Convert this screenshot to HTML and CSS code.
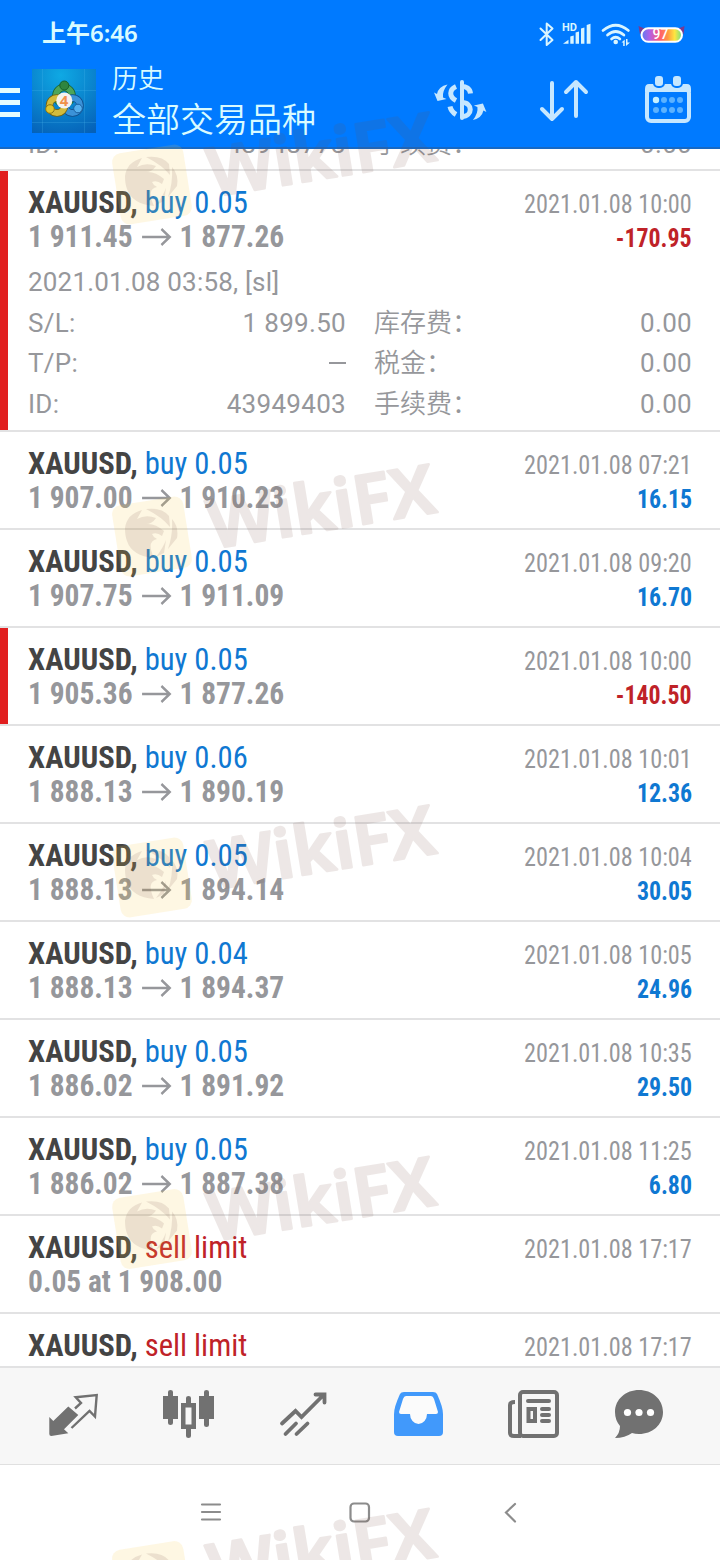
FILE: index.html
```html
<!DOCTYPE html>
<html lang="zh-CN">
<head>
<meta charset="utf-8">
<title>历史</title>
<link rel="stylesheet" href="styles.css">
</head>
<body>
<div class="screen">
  <header class="header">
    <div class="status">
      <div class="clock">上午6:46</div>
      <svg class="status-icons" width="150" height="32" viewBox="0 0 150 32">
        <defs><linearGradient id="batt"><stop offset="0" stop-color="#5a7df0"/><stop offset=".2" stop-color="#b060e8"/><stop offset=".45" stop-color="#ff5a70"/><stop offset=".65" stop-color="#ff9a40"/><stop offset=".82" stop-color="#ffe640"/><stop offset="1" stop-color="#6fe08a"/></linearGradient></defs>
        <g fill="none" stroke="#d9f5ff" stroke-width="2" stroke-linecap="round" stroke-linejoin="round">
          <path d="M10.500 11.500l12 11.500-5.800 5V6.500l5.800 5-12 11.500"/>
          <path d="M73 13.500q12.700-10.500 25.400 0M77.500 18q8.200-7 16.400 0M81.500 22q4.200-3.500 8.400 0" stroke-width="2.700"/>
        </g>
        <g fill="#d9f5ff">
          <path d="M33 26.700l5.500-4v4zM40.300 26.700V19.500l3.400-1v8.200zM45.600 26.700V15.500l3.400-1v12.200zM51 26.700V11.500l3.400-1v16.200zM56.700 26.700V8l3.800-1.200v19.900z"/>
          <circle cx="85.700" cy="25" r="2.300"/>
          <path d="M91.500 25.500l3.200-3v6.500h-1.500v-3.500zM96 22h1.500v3.500h2.500l-4 3.500z"/>
          <text x="32" y="14" class="hd">HD</text>
        </g>
        <path d="M108.500 9l6 2.500-4.500 6zM154.500 9l-6 2.500 5 6z" fill="#7a3a90"/>
        <rect x="111.500" y="11.300" width="40.500" height="13.500" rx="6.700" fill="url(#batt)" stroke="#fff" stroke-width="2"/>
        <text x="122.500" y="22" class="pct">97</text>
      </svg>
    </div>
    <div class="bar">
      <div class="menu"><i></i><i></i><i></i></div>
      <svg class="logo" width="64" height="64" viewBox="0 0 64 64">
        <defs>
          <radialGradient id="lb" cx=".45" cy=".1" r="1"><stop offset="0" stop-color="#0fa9e4"/><stop offset="1" stop-color="#0561b8"/></radialGradient>
        </defs>
        <rect width="64" height="64" fill="url(#lb)"/>
        <path d="M10.500 0v64M52.500 0v64M0 21.500h64M0 53.500h64" stroke="#58bdf0" stroke-opacity=".22"/>
        <g fill="none">
          <circle cx="32" cy="26.500" r="8" stroke="#17602a" stroke-width="7.500"/>
          <circle cx="32" cy="26.500" r="8" stroke="#4da55a" stroke-width="6"/>
          <circle cx="40.500" cy="36.500" r="7.500" stroke="#124f8c" stroke-width="7.500"/>
          <circle cx="40.500" cy="36.500" r="7.500" stroke="#3b92d8" stroke-width="6"/>
          <circle cx="25" cy="36.500" r="7.500" stroke="#746312" stroke-width="7.500"/>
          <circle cx="25" cy="36.500" r="7.500" stroke="#d3bb3c" stroke-width="6"/>
        </g>
        <circle cx="32.300" cy="16.500" r="4.500" fill="#2f8540" stroke="#17602a"/>
        <circle cx="18" cy="40" r="4.300" fill="#e0c62f" stroke="#8a7414"/>
        <circle cx="46" cy="39.500" r="4.300" fill="#55b0ee" stroke="#1a5fa0"/>
        <circle cx="32.300" cy="31.500" r="8" fill="#f4f2ee"/>
        <text x="27.800" y="37" class="four">4</text>
      </svg>
      <div class="titles">
        <div class="t1">历史</div>
        <div class="t2">全部交易品种</div>
      </div>
      <svg class="tools" width="270" height="60" viewBox="0 0 270 60">
        <g fill="none" stroke="#c6e7ff" stroke-width="4" stroke-linecap="round" stroke-linejoin="round">
          <path d="M32 16v36"/>
          <path d="M26 20.500c-7 3-7 10.500 0 14M32 20.500c4 0 8 2 8.500 7M32 36.500c11 0 11 14 0 14M20 40.500q1 5 6 8" stroke-width="5" stroke-linecap="butt"/>
          <path d="M122 17v36M112 43l10 10 10-10M146 50V16M136 26l10-10 10 10"/>
        </g>
        <path id="turn" d="M17.500 18.500q-9 2-10.500 9.500l-3-1.500 3.500 8.500 9-2-3.500-1.500q-1-6 4.500-13z" fill="#c6e7ff"/>
        <use href="#turn" transform="rotate(180 30.200 36.200)"/>
        <rect x="217" y="23" width="42" height="32" rx="4" fill="none" stroke="#c6e7ff" stroke-width="4"/>
        <path d="M215 23q0-5 4-5h38q4 0 4 5v3h-46z" fill="#c6e7ff"/>
        <g fill="#c6e7ff" stroke="#007aff" stroke-width="2"><rect x="224" y="9" width="10" height="12" rx="4"/><rect x="242" y="9" width="10" height="12" rx="4"/></g>
        <g fill="#5cb2ff"><circle cx="226" cy="34" r="3.200" fill="#c6f0ff"/><circle cx="234" cy="34" r="3"/><circle cx="242" cy="34" r="3"/><circle cx="250" cy="34" r="3"/><circle cx="226" cy="44" r="3"/><circle cx="234" cy="44" r="3"/><circle cx="242" cy="44" r="3"/><circle cx="250" cy="44" r="3"/></g>
      </svg>
    </div>
  </header>

  <svg width="0" height="0" class="defs">
    <symbol id="arrow" viewBox="0 0 32 20"><path d="M0 10h30M21 2l9 8-9 8" fill="none" stroke="#96979b" stroke-width="2.600"/></symbol>
  </svg>

  <main class="list">
    <section class="partial">
      <div class="detail"><span>ID:</span><span class="v">43948773</span><span class="c">手续费：</span><span class="v">0.00</span></div>
    </section>
    <section class="deal open loss">
      <div class="line a"><p><b>XAUUSD,</b> <em>buy 0.05</em></p><time>2021.01.08 10:00</time></div>
      <div class="line p"><p>1 911.45<svg><use href="#arrow"/></svg>1 877.26</p><strong>-170.95</strong></div>
      <div class="detail first"><span class="w">2021.01.08 03:58, [sl]</span></div>
      <div class="detail"><span>S/L:</span><span class="v">1 899.50</span><span class="c">库存费：</span><span class="v">0.00</span></div>
      <div class="detail"><span>T/P:</span><span class="v"><i class="dash"></i></span><span class="c">税金：</span><span class="v">0.00</span></div>
      <div class="detail"><span>ID:</span><span class="v">43949403</span><span class="c">手续费：</span><span class="v">0.00</span></div>
    </section>
    <section class="deal">
      <div class="line a"><p><b>XAUUSD,</b> <em>buy 0.05</em></p><time>2021.01.08 07:21</time></div>
      <div class="line p"><p>1 907.00<svg><use href="#arrow"/></svg>1 910.23</p><strong>16.15</strong></div>
    </section>
    <section class="deal">
      <div class="line a"><p><b>XAUUSD,</b> <em>buy 0.05</em></p><time>2021.01.08 09:20</time></div>
      <div class="line p"><p>1 907.75<svg><use href="#arrow"/></svg>1 911.09</p><strong>16.70</strong></div>
    </section>
    <section class="deal loss">
      <div class="line a"><p><b>XAUUSD,</b> <em>buy 0.05</em></p><time>2021.01.08 10:00</time></div>
      <div class="line p"><p>1 905.36<svg><use href="#arrow"/></svg>1 877.26</p><strong>-140.50</strong></div>
    </section>
    <section class="deal">
      <div class="line a"><p><b>XAUUSD,</b> <em>buy 0.06</em></p><time>2021.01.08 10:01</time></div>
      <div class="line p"><p>1 888.13<svg><use href="#arrow"/></svg>1 890.19</p><strong>12.36</strong></div>
    </section>
    <section class="deal">
      <div class="line a"><p><b>XAUUSD,</b> <em>buy 0.05</em></p><time>2021.01.08 10:04</time></div>
      <div class="line p"><p>1 888.13<svg><use href="#arrow"/></svg>1 894.14</p><strong>30.05</strong></div>
    </section>
    <section class="deal">
      <div class="line a"><p><b>XAUUSD,</b> <em>buy 0.04</em></p><time>2021.01.08 10:05</time></div>
      <div class="line p"><p>1 888.13<svg><use href="#arrow"/></svg>1 894.37</p><strong>24.96</strong></div>
    </section>
    <section class="deal">
      <div class="line a"><p><b>XAUUSD,</b> <em>buy 0.05</em></p><time>2021.01.08 10:35</time></div>
      <div class="line p"><p>1 886.02<svg><use href="#arrow"/></svg>1 891.92</p><strong>29.50</strong></div>
    </section>
    <section class="deal">
      <div class="line a"><p><b>XAUUSD,</b> <em>buy 0.05</em></p><time>2021.01.08 11:25</time></div>
      <div class="line p"><p>1 886.02<svg><use href="#arrow"/></svg>1 887.38</p><strong>6.80</strong></div>
    </section>
    <section class="deal">
      <div class="line a"><p><b>XAUUSD,</b> <em class="sell">sell limit</em></p><time>2021.01.08 17:17</time></div>
      <div class="line p"><p>0.05 at 1 908.00</p></div>
    </section>
    <section class="deal">
      <div class="line a"><p><b>XAUUSD,</b> <em class="sell">sell limit</em></p><time>2021.01.08 17:17</time></div>
    </section>
  </main>

  <nav class="tabs">
    <svg width="720" height="96" viewBox="0 1368 720 96">
      <g fill="#717171" stroke="none">
        <path d="M49.300 1417l4 4 15-14.500 10 8.500-14.300 14.300 4.300 4-17 2.700q-2 0-2-2z"/>
        <path d="M163 1396h5v-4q0-2 2.500-2t2.500 2v4h5v23h-5v4q0 2-2.500 2t-2.500-2v-4h-5z"/>
        <path d="M199 1396h5v-4q0-2 2.500-2t2.500 2v4h5v23h-5v6q0 2-2.500 2t-2.500-2v-6h-5z"/>
        <path fill-rule="evenodd" d="M181 1403h5v-5q0-2 2.500-2t2.500 2v5h5v26h-5v7q0 2-2.500 2t-2.500-2v-7h-5zM185.500 1407.500v17h6v-17z"/>
        <path d="M639 1390c13 0 24 9 24 22s-11 22-24 22q-4 0-7-1-7 5-17 5 5-5 5-12-5-6-5-14c0-13 11-22 24-22z"/>
      </g>
      <g fill="none" stroke="#717171" stroke-width="3">
        <path d="M71.500 1428l18-17 5.500 5.500 1.700-21.500-21 2.300 5.300 5.700-6 5.500" stroke-width="2.400"/>
        <path d="M282 1423.500l13.500-12.500 6 6 22-22M315.500 1394.500h9v8M285.500 1434l10.500-10.500M296.500 1434l11-10.500" stroke-width="3.800" stroke-linecap="round"/>
        <rect x="520" y="1392" width="37" height="44" rx="3" stroke-width="4"/>
        <path d="M515 1402q-5 0-5 3v28q0 3 4 3h7" stroke-width="4"/>
        <path d="M528 1401h21M542 1409h7M542 1415h7M542 1421h7" stroke-width="4" stroke-linecap="round"/>
        <rect x="528.500" y="1409" width="6.500" height="12" stroke-width="4"/>
      </g>
      <g fill="#fff"><circle cx="627.500" cy="1412.500" r="3.600"/><circle cx="639" cy="1412.500" r="3.600"/><circle cx="650.500" cy="1412.500" r="3.600"/></g>
      <path d="M404 1392h29q3 0 4 2 6 13 6 20v18q0 4-4 4h-41q-4 0-4-4v-18q0-7 6-20 1-2 4-2z" fill="#4199fb"/>
      <path d="M406 1396h25q2 0 3 3l4 13q0 2-2 2h-9a8.500 10 0 0 1-17 0h-9q-2 0-2-2l4-13q1-3 3-3z" fill="#fbfbfb"/>
    </svg>
  </nav>
  <footer class="sysnav">
    <svg width="720" height="95" viewBox="0 1465 720 95" fill="none" stroke="#8c8c8c" stroke-width="2.200" stroke-linecap="round">
      <path d="M202 1504.500h18M202 1512h18M202 1519.500h18"/>
      <rect x="350.500" y="1503.500" width="18.500" height="18" rx="3.500"/>
      <path d="M515 1504l-9 8.500 9 9"/>
    </svg>
  </footer>

  <svg class="marks" width="720" height="1560" viewBox="0 0 720 1560">
    <defs>
      <g id="mark">
        <rect x="-36" y="-36" width="72" height="72" rx="9" transform="translate(52 96.500) rotate(-9)" fill="#f5c846" fill-opacity=".15"/>
        <g fill="#785046" stroke="#785046" opacity=".13">
          <path stroke="none" d="M25 88Q27 74 42 70L37 79Q46 74 56 78Q52 84 46 84Q55 83 64 91L62 96Q57 92 52 94Q53 97 57 99Q46 101 54 118Q32 116 27 101Q25 96 25 88zM46 69Q62 67 69 76L70 87Q62 77 46 69zM72 79Q79 87 77 98L68 109Q73 95 72 79zM66 100L64 113L56 117Q63 108 66 100z"/>
          <text transform="translate(112 109) rotate(-9.300)" textLength="229" lengthAdjust="spacingAndGlyphs" class="wiki">WikiFX</text>
        </g>
      </g>
    </defs>
    <use href="#mark" x="100" y="88"/>
    <use href="#mark" x="100" y="440"/>
    <use href="#mark" x="100" y="781"/>
    <use href="#mark" x="100" y="1132.500"/>
    <use href="#mark" x="100" y="1484.500"/>
  </svg>
</div>
</body>
</html>
```
FILE: styles.css
```css
* { box-sizing: border-box; margin: 0; padding: 0; }
body { width: 720px; height: 1560px; overflow: hidden; background: #fff; font-family: Roboto, "Noto Sans CJK SC", sans-serif; }
.screen { position: relative; width: 720px; height: 1560px; display: flex; flex-direction: column; overflow: hidden; }
.header { height: 149px; flex: none; background: #007aff; border-bottom: 2px solid #1769c4; color: #d9fbff; }
.status { height: 56px; display: flex; justify-content: space-between; padding: 13px 40px 0 42px; }
.clock { font: 600 24px/40px "Noto Sans", "Noto Sans CJK SC", sans-serif; }
.status-icons { margin-top: 4px; overflow: visible; }
.hd { font: 700 11px Roboto, sans-serif; }
.pct { font: 500 14px Roboto, sans-serif; fill: #fff; }
.bar { display: flex; height: 90px; }
.menu { width: 20px; padding-top: 32px; display: flex; flex-direction: column; gap: 7px; }
.menu i { height: 5px; background: #e4fcff; }
.logo { margin: 13px 0 0 12px; }
.four { font: 700 15px "Noto Sans", sans-serif; fill: #f0904a; }
.titles { width: 334px; padding-left: 16px; font-family: "Noto Sans CJK SC", sans-serif; font-weight: 350; }
.t1 { font-size: 26px; line-height: 36px; margin-top: 3px; }
.t2 { font-size: 34px; line-height: 44px; margin-top: 1px; }
.tools { margin-top: 10px; }
.defs { position: absolute; }
.list { height: 1217px; flex: none; overflow: hidden; color: #96979b; }
.partial { height: 22px; border-bottom: 2px solid #e2e2e3; overflow: hidden; padding: 0 28px; display: flex; flex-direction: column; justify-content: flex-end; }
.partial .detail { margin-bottom: 7px; flex: none; }
.deal { height: 98px; border-bottom: 2px solid #e2e2e3; padding: 14px 28px 0; }
.deal.open { height: 261px; }
.deal.loss { background: linear-gradient(#e11f1f, #e11f1f) 0 0 / 8px 100% no-repeat; }
.line { display: flex; justify-content: space-between; height: 34px; line-height: 34px; align-items: baseline; white-space: pre; font-stretch: 75%; font-family: "Roboto Condensed", Roboto, sans-serif; }
.line p { font-size: 32px; transform-origin: 0 50%; }
.a p { transform: scaleX(.957); }
.a b { color: #444; }
.a em { font-style: normal; color: #0f78d2; }
.a em.sell { color: #bf2228; }
time { font-size: 26px; transform: scaleX(.933); transform-origin: 100% 50%; }
.p p { font-weight: 700; transform: scaleX(.92); }
.p svg { width: 34px; height: 20px; margin: 0 8px 0 9px; }
.p strong { font-size: 26px; color: #0f78d2; transform: scaleX(.918); transform-origin: 100% 50%; }
.loss strong { color: #bf2228; }
.detail { display: grid; grid-template-columns: 120px 198px 1fr 120px; height: 40.500px; line-height: 40.500px; font-size: 26px; letter-spacing: .3px; align-items: baseline; white-space: pre; }
.detail.first { margin-top: 9px; height: 38.500px; letter-spacing: .2px; }
.w { grid-column: 1 / 5; }
.v { text-align: right; }
.c { padding-left: 28px; font-family: "Noto Sans CJK SC", sans-serif; font-weight: 350; letter-spacing: 0; }
.dash { display: inline-block; width: 17px; height: 2px; background: #96979b; vertical-align: 8px; }
.tabs { height: 99px; flex: none; border-top: 2px solid #e2e2e3; border-bottom: 1px solid #e0e0e0; background: #f7f7f7; }
.tabs svg, .sysnav svg { display: block; }
.sysnav { height: 95px; background: #fff; }
.marks { position: absolute; left: 0; top: 0; pointer-events: none; }
.wiki { font: 600 68px "Noto Sans", sans-serif; stroke-width: 2.500px; stroke-linejoin: round; }
```
